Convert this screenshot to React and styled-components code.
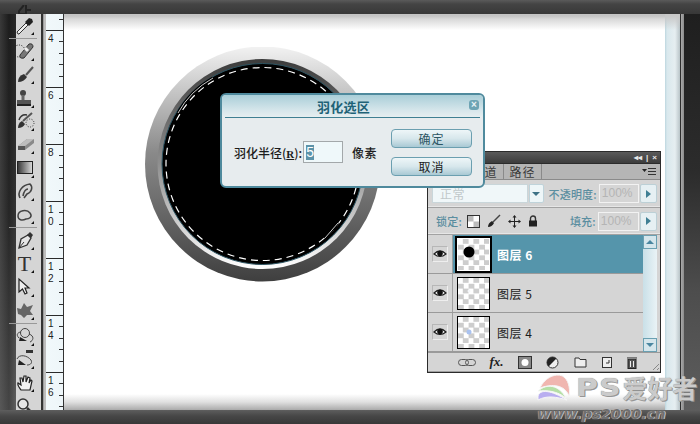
import React from "react";
import styled, { createGlobalStyle } from "styled-components";

const GlobalStyle = createGlobalStyle`
  html, body { margin: 0; padding: 0; background: #333; }
  body { font-family: "Noto Sans CJK SC", "Liberation Sans", sans-serif; }
`;

const Frame = styled.div`
  position: relative;
  width: 700px;
  height: 424px;
  overflow: hidden;
  display: flex;
  flex-direction: column;
`;

const TopBar = styled.div`
  height: 14px;
  flex: none;
  position: relative;
  z-index: 1;
  overflow: hidden;
  padding-left: 18px;
  background: linear-gradient(#5a5a5a 0, #444 4px, #383838 14px);
`;

const Middle = styled.div`
  flex: 1;
  display: flex;
  min-height: 0;
`;

const LeftEdge = styled.div`
  width: 16px;
  flex: none;
  background:
    linear-gradient(90deg, rgba(70,70,70,.5), rgba(0,0,0,.35) 9px, rgba(0,0,0,.1)),
    linear-gradient(#2c2c2c, #3a3a3a 50%, #6a6a6a);
`;

const ToolColumn = styled.div`
  width: 25px;
  flex: none;
  background: #d5d5d5;
  display: flex;
  flex-direction: column;
  align-items: stretch;
`;

const ToolSlot = styled.div`
  position: relative;
  height: 23.3px;
  flex: none;
  box-sizing: border-box;
  padding-right: 8px;
  display: flex;
  align-items: center;
  justify-content: center;
  svg { flex: none; }
  &::after {
    content: "";
    display: ${(p) => (p.$corner ? "block" : "none")};
    position: absolute;
    right: 7px;
    bottom: 2px;
    border-left: 3px solid transparent;
    border-bottom: 3px solid #111;
  }
`;

const ToolSep = styled.div`
  height: 1px;
  flex: none;
  margin: 1px 4px .5px -7px;
  background: #999;
`;

const TypeGlyph = styled.span`
  font: 22px "Liberation Serif", serif;
  color: #333;
  line-height: 22px;
`;

const Divider = styled.div`
  width: 5px;
  flex: none;
  background: linear-gradient(90deg, #333 0 2px, #9c9c9c 2px 3px, #bdbdbd 3px);
`;

const Ruler = styled.div`
  width: 18px;
  flex: none;
  box-sizing: border-box;
  padding-top: 16px;
  border-right: 1px solid #333;
  background: linear-gradient(90deg, #f1f8fb, #eef6f9);
  position: relative;
`;

const RulerTop = styled.div`
  position: absolute;
  top: 0;
  left: 0;
  right: 0;
  height: 16px;
  background: repeating-linear-gradient(180deg, transparent 0 4.7px, #333 4.7px 5.7px, transparent 5.7px 11.4px) right top / 4px 100% no-repeat;
`;

const RulerSegment = styled.div`
  height: 57px;
  box-sizing: border-box;
  border-top: 1px solid #2a2a2a;
  padding: 2px 0 0 2px;
  display: flex;
  flex-direction: column;
  font: 10px/12px "Liberation Sans", sans-serif;
  color: #222;
  background: repeating-linear-gradient(180deg, transparent 0 10.4px, #333 10.4px 11.4px) right top / 4px 100% no-repeat;
`;

const Canvas = styled.div`
  flex: 1;
  position: relative;
  background: #fff;
`;

const TopShade = styled.div`
  position: absolute;
  left: 0;
  right: 0;
  top: 0;
  height: 16px;
  background: linear-gradient(#c4c4c4 0 2px, #d8d8d8 5px, #fff);
`;

const BottomShade = styled.div`
  position: absolute;
  left: 0;
  right: 0;
  bottom: 0;
  height: 16px;
  background: linear-gradient(#fff, #e0e0e0 8px, #aaa);
`;

const Disc = styled.svg`
  position: absolute;
  left: 81px;
  top: 33px;
`;

const SideStrip = styled.div`
  width: 15px;
  flex: none;
  background:
    linear-gradient(#c8c8c8 0 2px, transparent 16px),
    linear-gradient(90deg, #bcd6df 0, #d9e8ed 2px, #e6eef1 10px, #b9c4c8);
`;

const SideLine = styled.div`
  width: 4px;
  flex: none;
  background: linear-gradient(90deg, #2d2d2d 0 1px, #a9a9a9 1px, #8a8a8a);
`;

const RightEdge = styled.div`
  width: 16px;
  flex: none;
  background: linear-gradient(#1f1f1f, #2c2c2c 40%, #4d4d4d 70%, #5d5d5d);
`;

const BottomBar = styled.div`
  height: 14px;
  flex: none;
  position: relative;
  z-index: 1;
  background: linear-gradient(#5e5e5e, #474747 6px, #383838);
`;

const Dialog = styled.div`
  position: absolute;
  z-index: 3;
  left: 220px;
  top: 93px;
  width: 265px;
  height: 95px;
  box-sizing: border-box;
  border: 2px solid #4f8a9d;
  border-radius: 6px;
  background: #e7ecee;
  display: flex;
  flex-direction: column;
  overflow: hidden;
`;

const DialogHead = styled.div`
  position: relative;
  height: 22px;
  flex: none;
  margin-bottom: 1px;
  padding-right: 18px;
  display: flex;
  align-items: center;
  justify-content: center;
  font-size: 13px;
  font-weight: 700;
  color: #1f6277;
  letter-spacing: .3px;
  background: linear-gradient(#a9ced8, #d6e6eb 70%, #e6eef0);
  &::after {
    content: "";
    position: absolute;
    left: 3px;
    right: 3px;
    bottom: -1px;
    height: 1px;
    background: #3f7f92;
  }
`;

const CloseMark = styled.span`
  position: absolute;
  right: 4px;
  top: 5px;
  width: 10px;
  height: 10px;
  border-radius: 3px;
  background: #6ea4b4;
  color: #eaf3f5;
  font: bold 10px/10px "Liberation Sans", sans-serif;
  text-align: center;
`;

const DialogBody = styled.div`
  flex: 1;
  display: flex;
  align-items: center;
  padding: 0 0 0 12px;
`;

const FieldLabel = styled.span`
  font-size: 12px;
  font-weight: 500;
  color: #1c1c1c;
  white-space: nowrap;
  letter-spacing: ${(p) => p.$spacing || 0}px;
  u { font-family: "Liberation Serif", serif; font-weight: 700; font-size: 11px; }
`;

const RadiusField = styled.div`
  box-sizing: border-box;
  width: 40px;
  height: 22px;
  margin: 0 9px 0 1px;
  border: 1px solid #a3a8aa;
  background: #eff8fa;
  padding-left: 2px;
  flex: none;
  display: flex;
  align-items: center;
`;

const RadiusValue = styled.span`
  width: 8px;
  height: 15px;
  background: #5c93a9;
  color: #fff;
  font: 14px/15px "Liberation Sans", sans-serif;
  text-align: center;
`;

const DialogButtons = styled.div`
  margin-left: 14px;
  display: flex;
  flex-direction: column;
  gap: 9px;
`;

const DialogButton = styled.div`
  box-sizing: border-box;
  width: 81px;
  height: 19px;
  border: 1px solid #6b9fb0;
  border-radius: 4px;
  background: linear-gradient(#eef6f8, #d7e7ec 50%, #a9c9d4);
  display: flex;
  align-items: center;
  justify-content: center;
  font-size: 12px;
  letter-spacing: 1px;
  color: ${(p) => (p.$default ? "#2c5563" : "#1a1a1a")};
`;

const Panel = styled.div`
  position: absolute;
  z-index: 2;
  left: 427px;
  top: 151px;
  width: 234px;
  height: 222px;
  box-sizing: border-box;
  border: 1px solid #2b2b2b;
  background: #d5d5d5;
  display: flex;
  flex-direction: column;
`;

const PanelTitle = styled.div`
  height: 11px;
  flex: none;
  background: linear-gradient(#5a5a5a, #3c3c3c);
  display: flex;
  align-items: center;
  justify-content: flex-end;
  gap: 4px;
  padding-right: 3px;
  color: #e8e8e8;
  font: bold 8px/11px "Liberation Sans", sans-serif;
`;

const PanelTabs = styled.div`
  height: 15px;
  flex: none;
  display: flex;
  background: #b5b5b5;
  border-top: 1px solid #2b2b2b;
  border-bottom: 1px solid #8a8a8a;
  padding-right: 4px;
`;

const PanelTab = styled.div`
  width: 38px;
  box-sizing: border-box;
  border-right: 1px solid #8a8a8a;
  font-size: 12px;
  line-height: 15px;
  letter-spacing: 1px;
  text-align: center;
  color: #3a3a3a;
`;

const MenuIcon = styled.svg`
  margin: 4px 0 0 auto;
`;

const OptionRow = styled.div`
  height: ${(p) => p.$h}px;
  flex: none;
  box-sizing: border-box;
  display: flex;
  align-items: center;
  padding: 0 3px 0 4px;
  border-bottom: 1px solid #a2a2a2;
  box-shadow: inset 0 -1px 0 #e6e6e6;
`;

const BlendSelect = styled.div`
  box-sizing: border-box;
  width: 97px;
  height: 19px;
  border: 1px solid #c9d6da;
  background: #f0f7f9;
  color: #c0c8ca;
  font-size: 12px;
  line-height: 17px;
  padding-left: 7px;
  letter-spacing: .5px;
`;

const BlendArrow = styled.div`
  box-sizing: border-box;
  width: 15px;
  height: 19px;
  margin-left: 1px;
  border: 1px solid #bfd3da;
  border-radius: 0 2px 2px 0;
  background: #eef6f8;
  display: flex;
  align-items: center;
  justify-content: center;
  &::before {
    content: "";
    border: 4px solid transparent;
    border-top: 4px solid #3f7286;
    border-bottom: 0;
  }
`;

const OptionLabel = styled.span`
  font-size: 11px;
  font-weight: 500;
  color: #5b8ea0;
  letter-spacing: .2px;
  white-space: nowrap;
  margin-left: ${(p) => p.$left || 0}px;
`;

const PercentBox = styled.div`
  box-sizing: border-box;
  width: 41px;
  height: 19px;
  margin-left: 2px;
  border: 1px solid #f2f2f2;
  background: #d5d5d5;
  color: #b4b4b4;
  font: 12px/17px "Liberation Sans", sans-serif;
  padding-left: 2px;
`;

const PercentArrow = styled.div`
  box-sizing: border-box;
  width: 17px;
  height: 19px;
  margin-left: 1px;
  border: 1px solid #bcd0d6;
  border-radius: 2px;
  background: #e6f0f3;
  display: flex;
  align-items: center;
  justify-content: center;
  &::before {
    content: "";
    border: 4px solid transparent;
    border-left: 5px solid #3f7f94;
    border-right: 0;
  }
`;

const LockIcons = styled.div`
  display: flex;
  align-items: center;
  gap: 7px;
  margin-left: 5px;
  width: 103px;
  flex: none;
`;

const LayerArea = styled.div`
  flex: 1;
  display: flex;
  min-height: 0;
`;

const LayerList = styled.div`
  flex: 1;
  display: flex;
  flex-direction: column;
`;

const LayerRow = styled.div`
  flex: 1;
  box-sizing: border-box;
  display: flex;
  align-items: center;
  border-bottom: 1px solid #9a9a9a;
  background: ${(p) => (p.$selected ? "#5595ab" : "transparent")};
  color: ${(p) => (p.$selected ? "#fff" : "#1c1c1c")};
  font-weight: ${(p) => (p.$selected ? 700 : 400)};
`;

const EyeCell = styled.div`
  width: 25px;
  align-self: stretch;
  flex: none;
  box-sizing: border-box;
  background: #d5d5d5;
  border-right: 1px solid #a0a0a0;
  display: flex;
  align-items: center;
  justify-content: center;
`;

const EyeBox = styled.div`
  box-sizing: border-box;
  width: 16px;
  height: 16px;
  border: 1px solid #b7b7b7;
  border-right-color: #eee;
  border-bottom-color: #eee;
  display: flex;
  align-items: center;
  justify-content: center;
`;

const Thumb = styled.div`
  position: relative;
  box-sizing: border-box;
  width: 33px;
  height: 33px;
  margin-left: 4px;
  flex: none;
  border: 1px solid ${(p) => (p.$selected ? "#fff" : "#000")};
  background: repeating-conic-gradient(#cdcdcd 0 25%, #fff 0 50%) 0 0 / 10.6px 10.6px;
  box-shadow: ${(p) => (p.$selected ? "0 0 0 2px #000" : "none")};
`;

const ThumbMark = styled.span`
  position: absolute;
  left: 35%;
  top: ${(p) => p.$top}%;
  width: ${(p) => p.$size}px;
  height: ${(p) => p.$size}px;
  transform: translate(-50%, -50%);
  border-radius: 50%;
  background: ${(p) => p.$color};
`;

const LayerName = styled.span`
  margin-left: 7px;
  font-size: 12px;
  letter-spacing: .5px;
`;

const ScrollBar = styled.div`
  width: 14px;
  flex: none;
  margin-right: 3px;
  display: flex;
  flex-direction: column;
  background: linear-gradient(90deg, #c9e0e8, #eaf3f6);
`;

const ScrollButton = styled.div`
  box-sizing: border-box;
  height: 14px;
  flex: none;
  border: 1px solid #6aa0b2;
  background: #d5e6ec;
  display: flex;
  align-items: center;
  justify-content: center;
  &::before {
    content: "";
    border: 4px solid transparent;
    ${(p) => (p.$down ? "border-top: 4px solid #4a86a0; border-bottom: 0;" : "border-bottom: 4px solid #4a86a0; border-top: 0;")}
  }
`;

const ScrollTrack = styled.div`
  flex: 1;
`;

const PanelFooter = styled.div`
  position: relative;
  height: 20px;
  flex: none;
  box-sizing: border-box;
  display: flex;
  align-items: center;
  padding-left: 30px;
  gap: 13.5px;
  border-top: 1px solid #9a9a9a;
  border-bottom: 1px solid #a0a0a0;
`;

const FxText = styled.span`
  font: italic bold 13px/14px "Liberation Serif", serif;
  color: #222;
  width: 15px;
`;

const Grip = styled.div`
  position: absolute;
  right: 1px;
  bottom: 1px;
  width: 9px;
  height: 9px;
  background: repeating-linear-gradient(135deg, transparent 0 2px, #888 2px 3px);
  clip-path: polygon(100% 0, 100% 100%, 0 100%);
`;

const Watermark = styled.div`
  position: absolute;
  z-index: 2;
  left: 537px;
  top: 374px;
  width: 163px;
  display: flex;
  flex-direction: column;
`;

const BrandRow = styled.div`
  display: flex;
  align-items: center;
  height: 27px;
`;

const BrandName = styled.span`
  margin-left: 5px;
  font: 700 25px/27px "Noto Sans CJK SC", sans-serif;
  color: #cbcbcb;
  text-shadow: 0 0 1px #777, 1px 1px 0 #999;
  white-space: nowrap;
`;

const BrandLetters = styled.span`
  font: 700 30px/27px "DejaVu Sans", sans-serif;
  letter-spacing: 1px;
  margin-right: 1px;
  display: inline-block;
  transform: scaleY(.85);
`;

const BrandUrl = styled.span`
  margin-top: 6px;
  font: italic 700 14.5px/14px "DejaVu Sans", sans-serif;
  letter-spacing: 0;
  color: #707070;
  text-shadow: 0 0 1px #ddd, 1px 0 0 #bbb;
  white-space: nowrap;
`;

const Svg = ({ w = 20, h = 20, children }) => (
  <svg width={w} height={h} viewBox={`0 0 ${w} ${h}`}>
    {children}
  </svg>
);

const tools = [
  { key: "dropper", icon: <Svg><path d="M3 18 L2 16 L11 7 L13 9 L4 18Z" fill="#eee" stroke="#333" /><path d="M10 6 L14 10 L16 8 L18 6 L17 3 L14 2 L12 4Z" fill="#222" /></Svg> },
  { sep: true },
  { key: "heal", icon: <Svg><circle cx="4" cy="10" r="6" fill="none" stroke="#222" strokeDasharray="1 1.5" /><path d="M5 14 L14 3 Q18 2 18 6 L9 17 Q4 18 5 14Z" fill="#777" stroke="#333" /><path d="M10 7 L13 10" stroke="#eee" strokeWidth="3" /></Svg> },
  { key: "brush", icon: <Svg><path d="M11 10 L18 2" stroke="#555" strokeWidth="2" /><path d="M3 17 Q3 11 9 9 L12 12 Q9 17 3 17Z" fill="#333" /></Svg> },
  { key: "stamp", icon: <Svg><circle cx="8" cy="5" r="3" fill="#444" /><rect x="6.5" y="7" width="3" height="5" fill="#666" /><rect x="2" y="12" width="14" height="4" fill="#555" /><rect x="2" y="16" width="14" height="2" fill="#222" /></Svg> },
  { key: "history", icon: <Svg><path d="M8 10 L17 2" stroke="#555" strokeWidth="2" /><path d="M3 17 Q3 12 7 10 L10 13 Q8 17 3 17Z" fill="#333" /><path d="M4 9 Q6 3 12 4" fill="none" stroke="#333" strokeWidth="1.5" /><circle cx="15" cy="12" r="4" fill="none" stroke="#333" strokeDasharray="1 1.5" /></Svg> },
  { key: "eraser", icon: <Svg><path d="M3 11 L12 4 L19 4 L19 8 L10 15 L3 15Z" fill="#8a8a8a" /><path d="M3 11 L12 4 L19 4 L10 11Z" fill="#bdbdbd" /><path d="M3 11 H10 V15 H3Z" fill="#555" /></Svg> },
  { key: "gradient", icon: <Svg><defs><linearGradient id="toolGrad" x1="0" x2="1"><stop offset="0" stopColor="#333" /><stop offset="1" stopColor="#ddd" /></linearGradient></defs><rect x="2.5" y="3.5" width="15" height="12" fill="url(#toolGrad)" stroke="#222" /></Svg> },
  { key: "smudge", icon: <Svg><path d="M5 17 C2 11 7 4 15 3 C18 6 17 11 12 13 L9 17 M8 15 C9 10 11 8 13 8" fill="none" stroke="#444" strokeWidth="1.6" /></Svg> },
  { key: "dodge", icon: <Svg><path d="M3 11 C3 5 12 4 15 8 C18 12 14 14 11 14 C7 16 3 15 3 11Z" fill="none" stroke="#444" strokeWidth="1.5" /></Svg> },
  { sep: true },
  { key: "pen", icon: <Svg><path d="M4 18 L6 9 L13 5 L16 8 L12 15Z" fill="#e5e5e5" stroke="#333" strokeWidth="1.3" /><path d="M4 18 L9 12" stroke="#333" /><path d="M12 5 L15 2 L18 5 L16 8Z" fill="#333" /></Svg> },
  { key: "type", icon: <TypeGlyph>T</TypeGlyph> },
  { key: "arrow", icon: <Svg><path d="M4 2 V15 L7.5 12 L10 17 L12 16 L10 11 L14 11Z" fill="#eee" stroke="#222" strokeWidth="1.2" /></Svg> },
  { key: "shape", icon: <Svg><path d="M2 8 L6 9 L9 3 L12 7 L18 5 L15 11 L18 15 L12 15 L9 18 L6 15 L3 14Z" fill="#666" /></Svg> },
  { sep: true },
  { key: "orbit", icon: <Svg><circle cx="10" cy="7" r="4.5" fill="none" stroke="#444" /><path d="M4 12 C0 8 4 6 6 6 M14 8 C20 10 18 15 15 16" fill="none" stroke="#444" /><path d="M5 11 L12 15 H4Z" fill="#222" /></Svg> },
  { key: "orbit2", icon: <Svg><rect x="11" y="1" width="7" height="3" fill="#333" /><path d="M2 10 C4 5 12 6 16 11 C18 15 14 16 12 16" fill="none" stroke="#444" /><path d="M4 11 L11 16 H3Z" fill="#222" /></Svg> },
  { key: "hand", icon: <Svg><path d="M6 17 C4 14 2 12 3 10 L6 12 L5 5 L7 5 L8 9 L9 3 L11 3 L11 9 L13 4 L15 5 L14 10 L16 7 L17 8 L15 17Z" fill="#f2f2f2" stroke="#222" strokeWidth="1.2" /></Svg> },
  { key: "zoom", icon: <Svg><circle cx="8" cy="8" r="5" fill="#e6e6e6" stroke="#333" strokeWidth="1.5" /><path d="M12 12 L17 17" stroke="#333" strokeWidth="2.5" /></Svg>, plain: true },
];

const rulerMarks = [["4"], ["6"], ["8"], ["1", "0"], ["1", "2"], ["1", "4"], ["1", "6"]];

const Disk = () => (
  <Disc width="236" height="236" viewBox="0 0 236 236">
    <defs>
      <linearGradient id="rimOuter" x1="0.5" y1="0" x2="0.5" y2="1">
        <stop offset="0" stopColor="#f2f2f2" />
        <stop offset="0.45" stopColor="#8a8a8a" />
        <stop offset="1" stopColor="#3f3f3f" />
      </linearGradient>
      <linearGradient id="rimInner" x1="0.5" y1="0" x2="0.5" y2="1">
        <stop offset="0" stopColor="#3c3c3c" />
        <stop offset="0.5" stopColor="#8f8f8f" />
        <stop offset="1" stopColor="#ffffff" />
      </linearGradient>
    </defs>
    <circle cx="117.5" cy="117" r="117.5" fill="url(#rimOuter)" />
    <circle cx="117.5" cy="117" r="105" fill="url(#rimInner)" />
    <circle cx="117.5" cy="117" r="100.5" fill="#000" stroke="#2d5563" strokeWidth="1" />
    <circle cx="117.5" cy="117" r="96.5" fill="none" stroke="#fff" strokeWidth="1.2" strokeDasharray="7 5" />
    <path d="M68 31 Q45 44 33 66" fill="none" stroke="#000" strokeWidth="3" />
    <path d="M68 31 Q45 44 33 66" fill="none" stroke="#fff" strokeWidth=".8" />
    <path d="M193 176 L180 191" fill="none" stroke="#000" strokeWidth="3" />
    <path d="M193 176 L180 191" fill="none" stroke="#fff" strokeWidth=".8" />
  </Disc>
);

const EyeIcon = () => (
  <svg width="14" height="10" viewBox="0 0 14 10">
    <path d="M1 5 Q7 -1 13 5 Q7 10 1 5Z" fill="#fff" stroke="#222" strokeWidth="1.2" />
    <circle cx="7" cy="4.6" r="2.8" fill="#111" />
  </svg>
);

const layers = [
  { name: "图层 6", selected: true, mark: { size: 11, color: "#000", top: 42 } },
  { name: "图层 5", mark: { size: 3, color: "#f5f7fa", top: 45 } },
  { name: "图层 4", mark: { size: 5, color: "#a9c2f0", top: 50 } },
];

const Logo = () => (
  <svg width="34" height="27" viewBox="0 0 34 27">
    <path d="M3 14 C8 3 20 -2 27 3 C33 8 33 18 32 22 C29 14 20 8 3 14Z" fill="#f0b6b0" stroke="#f6f6f6" />
    <path d="M1 17 C10 9 22 11 29 24 C20 17 10 16 1 17Z" fill="#b5dfa6" stroke="#f6f6f6" />
    <path d="M1 22 C3 15 14 16 30 26 C20 23 10 21 1 26Z" fill="#b9aef0" stroke="#f6f6f6" />
  </svg>
);

const App = () => (
  <Frame>
    <GlobalStyle />
    <TopBar>
      <svg width="14" height="14" viewBox="0 0 14 14">
        <path d="M8 0 V9 H1 V6 L6 0 M8 5 H13 M8 9 V13" fill="none" stroke="#232323" strokeWidth="2" />
      </svg>
    </TopBar>
    <Middle>
      <LeftEdge />
      <ToolColumn>
        {tools.map((t, i) =>
          t.sep ? (
            <ToolSep key={i} />
          ) : (
            <ToolSlot key={t.key} $corner={!t.plain}>
              {t.icon}
            </ToolSlot>
          )
        )}
      </ToolColumn>
      <Divider />
      <Ruler>
        <RulerTop />
        {rulerMarks.map((m) => (
          <RulerSegment key={m.join("")}>
            {m.map((d, i) => (
              <span key={i}>{d}</span>
            ))}
          </RulerSegment>
        ))}
      </Ruler>
      <Canvas>
        <TopShade />
        <BottomShade />
        <Disk />
      </Canvas>
      <SideStrip />
      <SideLine />
      <RightEdge />
    </Middle>
    <BottomBar />

    <Panel>
      <PanelTitle>
        <span>◂◂</span>
        <span>|</span>
        <span>×</span>
      </PanelTitle>
      <PanelTabs>
        <PanelTab />
        <PanelTab>通道</PanelTab>
        <PanelTab>路径</PanelTab>
        <MenuIcon width="14" height="7" viewBox="0 0 14 7">
          <path d="M0 1 H5 L2.5 4Z" fill="#222" />
          <path d="M6 0.5 H14 M6 3.5 H14 M6 6.5 H14" stroke="#333" />
        </MenuIcon>
      </PanelTabs>
      <OptionRow $h={28}>
        <BlendSelect>正常</BlendSelect>
        <BlendArrow />
        <OptionLabel $left={5}>不透明度:</OptionLabel>
        <PercentBox>100%</PercentBox>
        <PercentArrow />
      </OptionRow>
      <OptionRow $h={27}>
        <OptionLabel $left={4}>锁定:</OptionLabel>
        <LockIcons>
          <svg width="13" height="13" viewBox="0 0 13 13">
            <rect x=".5" y=".5" width="12" height="12" fill="#fff" stroke="#333" />
            <path d="M1 1 H6.5 V6.5 H1Z M6.5 6.5 H12 V12 H6.5Z" fill="#bbb" />
          </svg>
          <svg width="14" height="14" viewBox="0 0 14 14">
            <path d="M6 8 L13 1" stroke="#444" strokeWidth="1.5" />
            <path d="M1 13 Q1 9 5 7 L7 9 Q5 13 1 13Z" fill="#222" />
          </svg>
          <svg width="13" height="13" viewBox="0 0 13 13">
            <path d="M6.5 0 L8.5 2.5 H7 V6 H10.5 V4.5 L13 6.5 L10.5 8.5 V7 H7 V10.5 H8.5 L6.5 13 L4.5 10.5 H6 V7 H2.5 V8.5 L0 6.5 L2.5 4.5 V6 H6 V2.5 H4.5Z" fill="#222" />
          </svg>
          <svg width="10" height="12" viewBox="0 0 10 12">
            <path d="M2.5 6 V3.5 a2.5 2.5 0 0 1 5 0 V6" fill="none" stroke="#333" strokeWidth="1.4" />
            <rect x="1" y="5.5" width="8" height="6" fill="#222" />
          </svg>
        </LockIcons>
        <OptionLabel>填充:</OptionLabel>
        <PercentBox>100%</PercentBox>
        <PercentArrow />
      </OptionRow>
      <LayerArea>
        <LayerList>
          {layers.map((l) => (
            <LayerRow key={l.name} $selected={l.selected}>
              <EyeCell>
                <EyeBox>
                  <EyeIcon />
                </EyeBox>
              </EyeCell>
              <Thumb $selected={l.selected}>
                <ThumbMark $size={l.mark.size} $color={l.mark.color} $top={l.mark.top} />
              </Thumb>
              <LayerName>{l.name}</LayerName>
            </LayerRow>
          ))}
        </LayerList>
        <ScrollBar>
          <ScrollButton />
          <ScrollTrack />
          <ScrollButton $down />
        </ScrollBar>
      </LayerArea>
      <PanelFooter>
        <svg width="18" height="7" viewBox="0 0 18 7">
          <rect x=".5" y=".5" width="10" height="6" rx="3" fill="none" stroke="#555" />
          <rect x="7.5" y=".5" width="10" height="6" rx="3" fill="none" stroke="#555" />
        </svg>
        <FxText>fx.</FxText>
        <svg width="14" height="13" viewBox="0 0 14 13">
          <rect x=".5" y=".5" width="13" height="12" fill="#888" stroke="#333" />
          <circle cx="7" cy="6.5" r="3.5" fill="#fff" />
        </svg>
        <svg width="15" height="13" viewBox="0 0 15 13">
          <circle cx="6.5" cy="6.5" r="5.5" fill="#eee" stroke="#333" />
          <path d="M2.6 10.4 A5.5 5.5 0 0 1 10.4 2.6Z" fill="#222" />
        </svg>
        <svg width="13" height="11" viewBox="0 0 13 11">
          <path d="M1 10 V1 H5 L6 2.5 H12 V10Z" fill="#eee" stroke="#333" />
        </svg>
        <svg width="12" height="11" viewBox="0 0 12 11">
          <rect x="1.5" y=".5" width="9" height="10" fill="#eee" stroke="#333" />
          <path d="M5 6 H8 V3" fill="none" stroke="#333" />
        </svg>
        <svg width="12" height="13" viewBox="0 0 12 13">
          <rect x="2" y="3" width="8" height="9.5" fill="#555" stroke="#222" />
          <path d="M1 2.5 H11 M4.5 5 V11 M7.5 5 V11" stroke="#eee" />
          <path d="M1 2 H11" stroke="#222" />
        </svg>
        <Grip />
      </PanelFooter>
    </Panel>

    <Dialog>
      <DialogHead>
        羽化选区
        <CloseMark>×</CloseMark>
      </DialogHead>
      <DialogBody>
        <FieldLabel>
          羽化半径(<u>R</u>):
        </FieldLabel>
        <RadiusField>
          <RadiusValue>5</RadiusValue>
        </RadiusField>
        <FieldLabel $spacing={0.5}>像素</FieldLabel>
        <DialogButtons>
          <DialogButton $default>确定</DialogButton>
          <DialogButton>取消</DialogButton>
        </DialogButtons>
      </DialogBody>
    </Dialog>

    <Watermark>
      <BrandRow>
        <Logo />
        <BrandName>
          <BrandLetters>PS</BrandLetters>爱好者
        </BrandName>
      </BrandRow>
      <BrandUrl>www.ps2000.cn</BrandUrl>
    </Watermark>
  </Frame>
);

export default App;
